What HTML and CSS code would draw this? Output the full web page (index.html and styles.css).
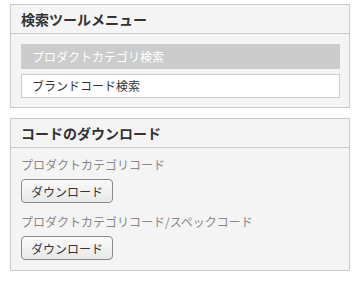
FILE: index.html
```html
<!DOCTYPE html>
<html lang="ja">
<head>
<meta charset="utf-8">
<link rel="stylesheet" href="styles.css">
</head>
<body>
<div class="page">
  <section class="panel">
    <h2 class="panel-title">検索ツールメニュー</h2>
    <div class="panel-body menu">
      <div class="menu-item active">プロダクトカテゴリ検索</div>
      <div class="menu-item">ブランドコード検索</div>
    </div>
  </section>
  <section class="panel">
    <h2 class="panel-title">コードのダウンロード</h2>
    <div class="panel-body downloads">
      <div class="dl-group">
        <div class="dl-label">プロダクトカテゴリコード</div>
        <button class="dl-btn">ダウンロード</button>
      </div>
      <div class="dl-group">
        <div class="dl-label">プロダクトカテゴリコード/スペックコード</div>
        <button class="dl-btn">ダウンロード</button>
      </div>
    </div>
  </section>
</div>
</body>
</html>
```
FILE: styles.css
```css
html, body {
  margin: 0;
  padding: 0;
  background: #fff;
}
body {
  font-family: "Noto Sans CJK JP", "Noto Sans", sans-serif;
  color: #333;
}
.page {
  display: flex;
  flex-direction: column;
  gap: 10px;
  padding: 4px 4px 0 10px;
  width: 340px;
}
.panel {
  background: #f4f4f4;
  border: 1px solid #ccc;
}
.panel-title {
  margin: 0;
  height: 28px;
  line-height: 28px;
  padding: 0 10px;
  font-size: 14px;
  font-weight: bold;
  color: #333;
  border-bottom: 1px solid #ccc;
}
.panel-body {
  padding: 10px 9px 9px 10px;
}
.menu {
  display: flex;
  flex-direction: column;
  gap: 5px;
}
.menu-item {
  height: 22px;
  line-height: 22px;
  padding: 0 10px;
  font-size: 12px;
  background: #fff;
  border: 1px solid #ccc;
  color: #333;
}
.menu-item.active {
  height: 25px;
  line-height: 25px;
  padding: 0 11px;
  background: #ccc;
  border: none;
  color: #fff;
}
.downloads {
  padding: 8px 10px 10px 10px;
  display: flex;
  flex-direction: column;
  gap: 10px;
}
.dl-group {
  display: flex;
  flex-direction: column;
  align-items: flex-start;
  gap: 5px;
}
.dl-label {
  font-size: 12px;
  line-height: 18px;
  color: #888;
}
.dl-btn {
  height: 24px;
  width: 92px;
  padding: 0;
  font-family: inherit;
  font-size: 12px;
  color: #333;
  border: 1px solid #8a8a8a;
  border-radius: 4px;
  background: linear-gradient(#fafafa, #e8e8e8);
}
```
